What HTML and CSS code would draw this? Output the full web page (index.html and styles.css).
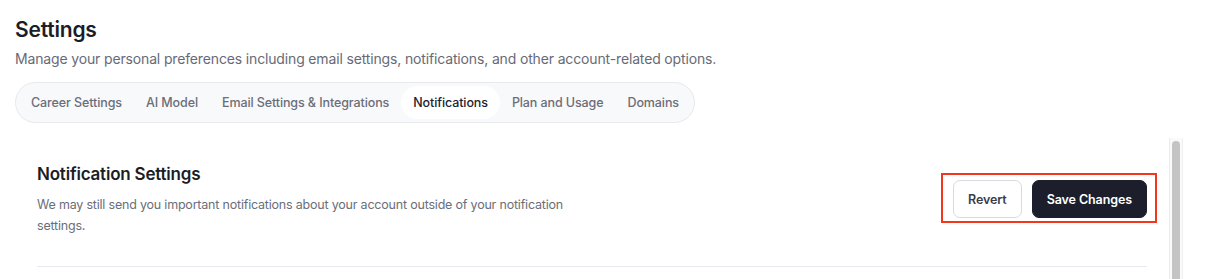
FILE: index.html
```html
<!DOCTYPE html>
<html lang="en">
<head>
    <meta charset="UTF-8">
    <title>Settings</title>
    <link rel="stylesheet" href="styles.css">
</head>
<body>

<div class="page">
    <h1 class="pageTitle">Settings</h1>
    <p class="pageIntro">Manage your personal preferences including email settings, notifications, and other account-related options.</p>

    <!--tabs for the settings sections-->
    <div class="tabBar">
        <span class="tab">Career Settings</span>
        <span class="tab">AI Model</span>
        <span class="tab">Email Settings &amp; Integrations</span>
        <span class="tab active">Notifications</span>
        <span class="tab">Plan and Usage</span>
        <span class="tab">Domains</span>
    </div>

    <div class="panel">
        <div class="panelBody">
            <div class="sectionHead">
                <div class="sectionText">
                    <h2 class="sectionTitle">Notification Settings</h2>
                    <p class="sectionDesc">We may still send you important notifications about your account outside of your notification settings.</p>
                </div>
                <div class="actions">
                    <button class="btn btnGhost">Revert</button>
                    <button class="btn btnDark">Save Changes</button>
                    <!--highlight box drawn round the buttons-->
                    <div class="highlight"></div>
                </div>
            </div>
        </div>
        <!--the panel's own scrollbar-->
        <div class="scrollTrack">
            <div class="scrollThumb"></div>
        </div>
    </div>
</div>

</body>
</html>
```

FILE: styles.css
```css
/*CSS for whole page*/
html, body {
    margin: 0;
    height: 100%;
    overflow: hidden;
}

body {
    background-color: #ffffff;
    font-family: "Inter", "Lato", sans-serif;
    color: #1b1d26;
}

.page {
    padding: 15px 22px 0 15px;
}

.pageTitle {
    margin: 0;
    font-size: 21px;
    line-height: 30px;
    font-weight: 600;
    letter-spacing: -0.2px;
    color: #1b1d26;
}

.pageIntro {
    margin: 4px 0 0 0;
    font-size: 14px;
    line-height: 20px;
    letter-spacing: -0.15px;
    color: #676a76;
}

/*CSS for the tab bar*/
.tabBar {
    display: inline-flex;
    margin-top: 13px;
    padding: 3px 3px;
    border: 1px solid #e7e9ef;
    border-radius: 21px;
    background-color: #f8f9fb;
}

.tab {
    padding: 0 12px;
    height: 33px;
    line-height: 33px;
    border-radius: 17px;
    font-size: 12.5px;
    font-weight: 500;
    letter-spacing: -0.1px;
    color: #6b6e79;
}

.tab.active {
    background-color: #ffffff;
    color: #1f2230;
}

/*CSS for the panel under the tabs*/
.panel {
    display: flex;
    margin-top: 15px;
    height: 400px;
}

.panelBody {
    flex: 1;
    padding: 24px 22px 0 22px;
}

.scrollTrack {
    width: 12px;
    padding: 3px 0 0 0;
    background-color: #fafafa;
    border-left: 1px solid #ebebeb;
    border-right: 1px solid #efefef;
}

.scrollThumb {
    margin: 0 2px 0 2px;
    height: 300px;
    border-radius: 5px;
    background-color: #c4c4c4;
}

.sectionHead {
    display: flex;
    align-items: center;
    justify-content: space-between;
    padding-bottom: 30px;
    border-bottom: 1px solid #e8e8f1;
}

.sectionTitle {
    margin: 0;
    font-size: 17px;
    line-height: 24px;
    font-weight: 600;
    letter-spacing: -0.2px;
    color: #1b1d26;
}

.sectionDesc {
    margin: 8px 0 0 0;
    max-width: 530px;
    font-size: 12.5px;
    line-height: 21px;
    letter-spacing: -0.2px;
    color: #6b6e79;
}

.actions {
    position: relative;
    display: flex;
    gap: 10px;
}

.btn {
    height: 38px;
    padding: 0 14px;
    border-radius: 7px;
    font-family: inherit;
    font-size: 12.5px;
    font-weight: 600;
    letter-spacing: -0.1px;
}

.btnGhost {
    background-color: #ffffff;
    border: 1px solid #d9dadf;
    color: #3a3d49;
}

.btnDark {
    background-color: #1c1f2b;
    border: 1px solid #1c1f2b;
    color: #ffffff;
}

/*red outline that sits over the buttons*/
.highlight {
    position: absolute;
    top: -7px;
    right: -10px;
    bottom: -5px;
    left: -12px;
    border: 2px solid #f4361c;
}
```
